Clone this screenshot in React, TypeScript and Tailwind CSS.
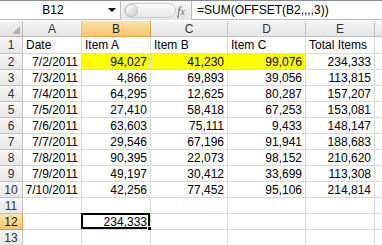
const cols = ["A", "B", "C", "D", "E", ""];

const rows: string[][] = [
  ["Date", "Item A", "Item B", "Item C", "Total Items", ""],
  ["7/2/2011", "94,027", "41,230", "99,076", "234,333", ""],
  ["7/3/2011", "4,866", "69,893", "39,056", "113,815", ""],
  ["7/4/2011", "64,295", "12,625", "80,287", "157,207", ""],
  ["7/5/2011", "27,410", "58,418", "67,253", "153,081", ""],
  ["7/6/2011", "63,603", "75,111", "9,433", "148,147", ""],
  ["7/7/2011", "29,546", "67,196", "91,941", "188,683", ""],
  ["7/8/2011", "90,395", "22,073", "98,152", "210,620", ""],
  ["7/9/2011", "49,197", "30,412", "33,699", "113,308", ""],
  ["7/10/2011", "42,256", "77,452", "95,106", "214,814", ""],
  ["", "", "", "", "", ""],
  ["", "234,333", "", "", "", ""],
  ["", "", "", "", "", ""],
];

function FormulaBar() {
  return (
    <div className="flex h-[20px] border-t border-[#8a8f96] bg-[#e9ecf0]">
      <div className="relative flex w-[121px] items-center justify-center border-r border-b border-[#b5bcc6] bg-white">
        <span className="pr-[14px] text-[12px]">B12</span>
        <span className="absolute right-[4px] top-[7px] h-0 w-0 border-x-[4px] border-t-[4px] border-x-transparent border-t-black" />
      </div>
      <div className="flex w-[70px] items-center justify-between bg-gradient-to-b from-[#f7f7f7] to-[#e2e4e7] pl-[3px] pr-[6px]">
        <div className="flex h-[15px] w-[52px] items-center rounded-full border border-[#c9cdd2] bg-gradient-to-b from-[#fbfbfb] to-[#e6e8eb]">
          <div className="h-[13px] w-[13px] rounded-full border border-[#b8bcc2] bg-gradient-to-br from-white to-[#c9ccd1]" />
        </div>
        <span className="font-['Liberation_Serif',serif] text-[13px] italic text-[#6d6d6d]">
          f<span className="text-[10px]">x</span>
        </span>
      </div>
      <div className="flex flex-1 items-center border-l border-b border-[#b5bcc6] bg-white pl-[5px] text-[12px]">
        =SUM(OFFSET(B2,,,,3))
      </div>
    </div>
  );
}

export default function App() {
  return (
    <div className="h-[245px] w-[382px] overflow-hidden bg-white font-['Liberation_Sans',Arial,sans-serif] text-black">
      <FormulaBar />
      <div className="h-[1px] bg-white" />
      <div className="grid grid-cols-[23px_59px_69px_77px_78px_69px_60px] grid-rows-[16px_17px_repeat(12,16px)]">
        <div className="relative border-r border-b border-[#b9b9b9] bg-gradient-to-b from-[#f2f2f2] to-[#e1e1e1]">
          <svg className="absolute bottom-[2px] right-[2px]" width="8" height="8" viewBox="0 0 8 8">
            <path d="M8 0 L8 8 L0 8 Z" fill="#b3b3b3" />
          </svg>
        </div>
        {cols.map((c, i) => (
          <div
            key={"c" + i}
            className={
              c === "B"
                ? "flex items-center justify-center border-r border-b border-[#e0a347] bg-gradient-to-b from-[#fae0ae] to-[#f5c56c] text-[12px] text-[#222]"
                : "flex items-center justify-center border-r border-b border-[#c4c4c4] bg-gradient-to-b from-[#f6f6f6] to-[#e4e4e4] text-[12px] text-[#333]"
            }
          >
            {c}
          </div>
        ))}
        {rows.map((r, ri) => {
          const n = ri + 1;
          return [
            <div
              key={"h" + n}
              className={
                n === 12
                  ? "flex items-center justify-center border-r border-b border-[#e0a347] bg-gradient-to-b from-[#fae0ae] to-[#f5c56c] text-[12px] text-[#222]"
                  : "flex items-center justify-center border-r border-b border-[#c4c4c4] bg-gradient-to-b from-[#f6f6f6] to-[#e6e6e6] text-[12px] text-[#333]"
              }
            >
              {n}
            </div>,
            ...r.map((v, ci) => {
              const yellow = n === 2 && ci >= 1 && ci <= 3;
              const selected = n === 12 && ci === 1;
              const left = n === 1;
              return (
                <div
                  key={n + "-" + ci}
                  className={
                    "relative flex items-center whitespace-nowrap border-r border-b border-[#d9d9d9] text-[12px] " +
                    (left ? "justify-start pl-[3px] " : "justify-end pr-[3px] ") +
                    (yellow ? "bg-[#ffff00]" : "bg-white")
                  }
                >
                  {v}
                  {selected && (
                    <>
                      <span className="pointer-events-none absolute -left-[1px] -top-[1px] h-[calc(100%+1px)] w-[calc(100%+1px)] border-2 border-black" />
                      <span className="absolute -bottom-[3px] -right-[3px] h-[6px] w-[6px] border border-white bg-black" />
                    </>
                  )}
                </div>
              );
            }),
          ];
        })}
      </div>
    </div>
  );
}
